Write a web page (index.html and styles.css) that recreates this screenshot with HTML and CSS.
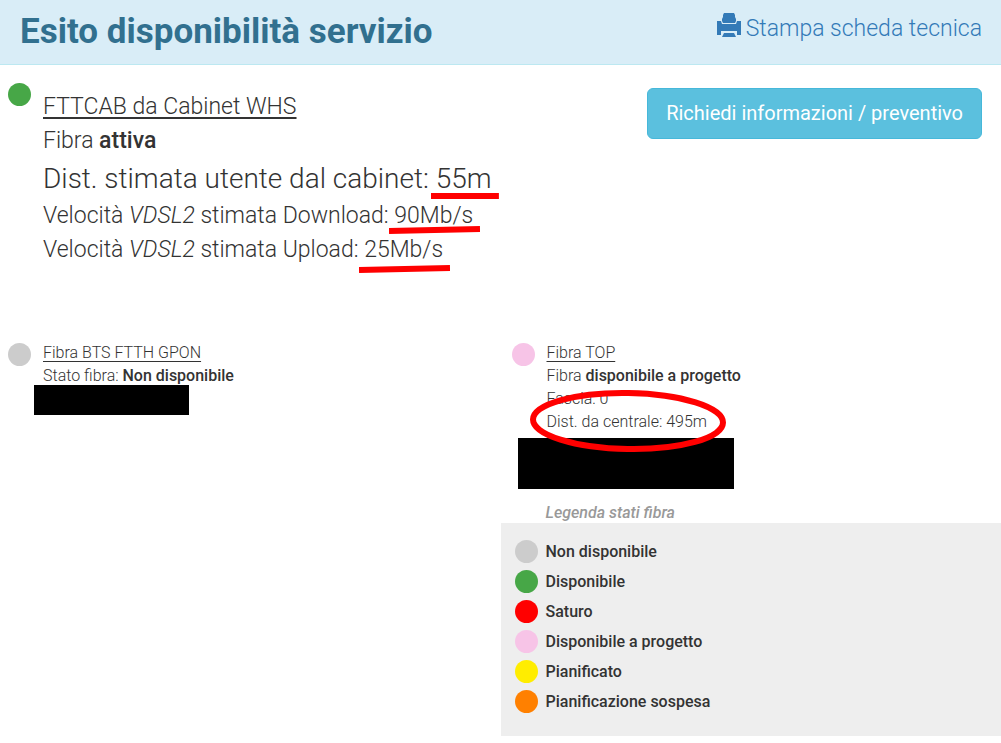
FILE: index.html
```html
<!DOCTYPE html>
<html lang="it">
<head>
<meta charset="utf-8">
<meta name="viewport" content="width=device-width, initial-scale=1">
<title>Esito disponibilità servizio</title>
<link rel="stylesheet" href="styles.css">
</head>
<body>
<header class="heading">
  <h1>Esito disponibilità servizio</h1>
  <a class="print" href="#">
    <svg class="print-icon" viewBox="0 0 24 24" aria-hidden="true">
      <path d="M7 0h10l1 2v2l1 2v2l-1 2H6L5 8V6l1-2V2z"/>
      <path d="M0 8h4l1 3h14l1-3h4v14h-4v-4H4v4H0z"/>
      <path d="M7 20h10l2 4H5z"/>
    </svg>
    <span>Stampa scheda tecnica</span>
  </a>
</header>
<main>
  <section class="service primary">
    <span class="dot green"></span>
    <div class="details">
      <p><u>FTTCAB da Cabinet WHS</u></p>
      <p>Fibra <b>attiva</b></p>
      <p class="distance">Dist. stimata utente dal cabinet: <span class="marked">55m<svg class="stroke" viewBox="0 0 74 10" preserveAspectRatio="none"><path d="M0 5H74"/></svg></span></p>
      <p>Velocità <i>VDSL2</i> stimata Download: <span class="marked">90Mb/s<svg class="stroke" viewBox="0 0 92 10" preserveAspectRatio="none"><path d="M0 6L92 4"/></svg></span></p>
      <p>Velocità <i>VDSL2</i> stimata Upload: <span class="marked low">25Mb/s<svg class="stroke" viewBox="0 0 88 10" preserveAspectRatio="none"><path d="M0 6L88 4"/></svg></span></p>
    </div>
    <button class="request" type="button">Richiedi informazioni / preventivo</button>
  </section>
  <div class="columns">
    <section class="service">
      <span class="dot grey"></span>
      <div class="details">
        <p><u>Fibra BTS FTTH GPON</u></p>
        <p>Stato fibra: <b>Non disponibile</b></p>
        <div class="redacted small"></div>
      </div>
    </section>
    <div>
      <section class="service">
        <span class="dot pink"></span>
        <div class="details">
          <p><u>Fibra TOP</u></p>
          <p>Fibra <b>disponibile a progetto</b></p>
          <p>Fascia: 0</p>
          <p class="circled">Dist. da centrale: 495m<svg class="ring" viewBox="0 0 196 64"><ellipse cx="98" cy="32" rx="95" ry="28" transform="rotate(1 98 32)"/></svg></p>
          <div class="redacted large"></div>
        </div>
      </section>
      <h2>Legenda stati fibra</h2>
      <ul class="legend">
        <li><span class="dot grey"></span>Non disponibile</li>
        <li><span class="dot green"></span>Disponibile</li>
        <li><span class="dot red"></span>Saturo</li>
        <li><span class="dot pink"></span>Disponibile a progetto</li>
        <li><span class="dot yellow"></span>Pianificato</li>
        <li><span class="dot orange"></span>Pianificazione sospesa</li>
      </ul>
    </div>
  </div>
</main>
</body>
</html>
```
FILE: styles.css
```css
* { box-sizing: border-box; }

body {
  margin: 0;
  background: #fff;
  color: #333;
  font: 300 16px/23px Roboto, "Open Sans", sans-serif;
}

p, h1, h2, ul { margin: 0; padding: 0; }
b { font-weight: 500; }
u { text-underline-offset: 3px; }

.heading {
  display: flex;
  justify-content: space-between;
  padding: 10px 19px 10px 20px;
  background: #d9edf7;
  border-bottom: 1px solid #bce8f1;
}

h1 {
  color: #31708f;
  font-size: 35px;
  line-height: 44px;
  font-weight: 700;
}

.print {
  display: flex;
  gap: 5px;
  color: #337ab7;
  font-size: 23px;
  line-height: 38px;
  text-decoration: none;
}

.print-icon {
  width: 24px;
  height: 24px;
  margin-top: 3px;
  fill: currentColor;
}

.service {
  display: flex;
  align-items: flex-start;
  gap: 12px;
  padding: 0 19px 0 8px;
}

.primary {
  padding-top: 18px;
  font-size: 23px;
  line-height: 34px;
}

.primary .details { padding-top: 7px; }
.distance { font-size: 28px; line-height: 41px; }

.dot {
  flex: none;
  width: 23px;
  height: 23px;
  border-radius: 50%;
}

.grey { background: #ccc; }
.green { background: #47a747; }
.red { background: #f00; }
.pink { background: #f7c4e7; }
.yellow { background: #ffed00; }
.orange { background: #ff8000; }

.request {
  margin: 5px 0 0 auto;
  padding: 10px 18px;
  border: 1px solid #46b8da;
  border-radius: 6px;
  background: #5bc0de;
  color: #fff;
  font: 400 20px/29px Roboto, sans-serif;
}

.marked, .circled { position: relative; }

.stroke {
  position: absolute;
  left: -5px;
  bottom: -6px;
  width: calc(100% + 12px);
  height: 10px;
}

.low .stroke { bottom: -11px; }

.stroke path { fill: none; stroke: #f00; stroke-width: 6; }

.columns {
  display: grid;
  grid-template-columns: 1fr 1fr;
  padding-top: 74px;
}

.columns .dot { margin-top: 2px; }
.columns > div .service { padding-left: 11px; }

.circled { width: max-content; }

.ring {
  position: absolute;
  top: -21px;
  left: -17px;
  width: 196px;
  height: 64px;
}

.ring ellipse { fill: none; stroke: #f00; stroke-width: 6; }

.redacted { background: #000; }
.small { width: 155px; height: 30px; margin: -2px 0 0 -9px; }
.large { width: 216px; height: 51px; margin: 5px 0 0 -29px; }

h2 {
  padding: 13px 0 0 45px;
  color: #999;
  font-size: 16px;
  line-height: 21px;
  font-weight: 500;
  font-style: italic;
}

.legend {
  display: grid;
  grid-auto-rows: 30px;
  padding: 13px 14px 20px;
  background: #eee;
  list-style: none;
  font-weight: 500;
}

.legend li {
  display: flex;
  align-items: center;
  gap: 8px;
}

.legend .dot { margin-top: 0; }
```
